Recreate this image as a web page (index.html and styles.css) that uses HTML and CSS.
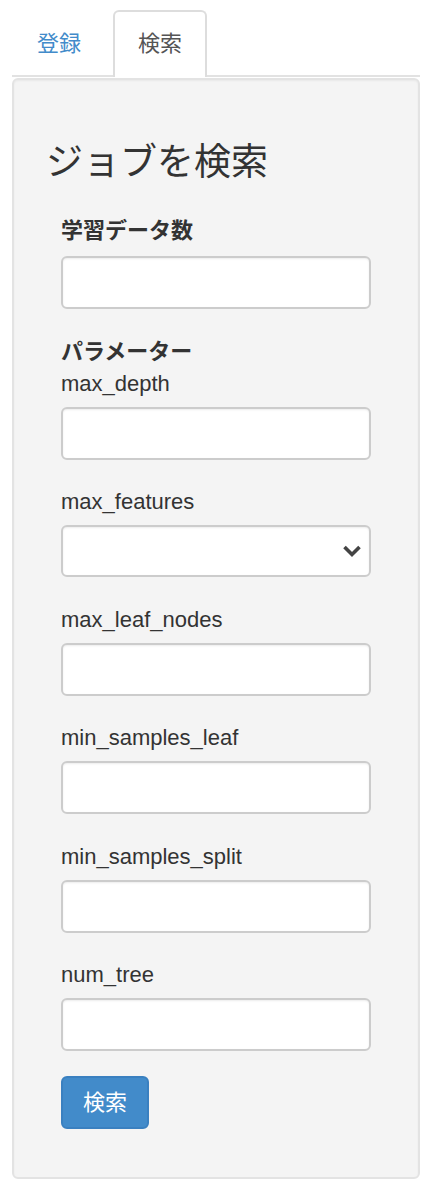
FILE: index.html
```html
<!DOCTYPE html>
<html lang="ja">
<head>
<meta charset="utf-8">
<title>ジョブを検索</title>
<link rel="stylesheet" href="styles.css">
</head>
<body>
<div class="page">
  <ul class="tabs">
    <li class="tab"><a class="tab-link" href="#">登録</a></li>
    <li class="tab active"><a class="tab-link" href="#">検索</a></li>
  </ul>
  <div class="well">
    <h3 class="title">ジョブを検索</h3>
    <form class="form">
      <div class="group first">
        <label class="label bold">学習データ数</label>
        <input class="control" type="text">
      </div>
      <div class="section-label">パラメーター</div>
      <div class="group">
        <label class="label">max_depth</label>
        <input class="control" type="text">
      </div>
      <div class="group">
        <label class="label">max_features</label>
        <div class="select-wrap">
          <select class="control select"><option></option></select>
          <svg class="chevron" width="20" height="14" viewBox="0 0 20 14"><path d="M2.5 3 L10 10.5 L17.5 3" fill="none" stroke="#444" stroke-width="3.6" stroke-linecap="butt" stroke-linejoin="miter"/></svg>
        </div>
      </div>
      <div class="group">
        <label class="label">max_leaf_nodes</label>
        <input class="control" type="text">
      </div>
      <div class="group">
        <label class="label">min_samples_leaf</label>
        <input class="control" type="text">
      </div>
      <div class="group">
        <label class="label">min_samples_split</label>
        <input class="control" type="text">
      </div>
      <div class="group">
        <label class="label">num_tree</label>
        <input class="control" type="text">
      </div>
      <button class="btn" type="button">検索</button>
    </form>
  </div>
</div>
</body>
</html>
```
FILE: styles.css
```css
* { box-sizing: border-box; }
html, body { margin: 0; padding: 0; background: #fff; }
body {
  font-family: "Liberation Sans", "Noto Sans CJK JP", sans-serif;
  font-size: 22px;
  line-height: 31px;
  color: #333;
}
.page { padding: 10px 10px 0 12px; }
.tabs {
  list-style: none;
  margin: 0;
  padding: 0;
  display: flex;
  border-bottom: 2px solid #e2e2e2;
}
.tab { margin-right: 7px; margin-bottom: -2px; }
.tab-link {
  display: block;
  padding: 16px 23px;
  line-height: 31px;
  border: 2px solid transparent;
  border-bottom: none;
  border-radius: 6px 6px 0 0;
  color: #428bca;
  text-decoration: none;
  height: 67px;
}
.tab.active .tab-link {
  color: #555;
  background: #fff;
  border-color: #ddd;
}
.well {
  margin-top: 1px;
  background: #f4f4f4;
  border: 2px solid #e3e3e3;
  border-radius: 6px;
  box-shadow: inset 0 1px 2px rgba(0,0,0,.05);
  padding: 0 34px 48px;
}
.title {
  margin: 62px 0 32px -2px;
  font-size: 37px;
  line-height: 41px;
  font-weight: 400;
  color: #333;
}
.form { padding: 0 13px; }
.group { margin-bottom: 26.5px; }
.group.first { margin-bottom: 28px; }
.label {
  display: block;
  margin-bottom: 8px;
  font-weight: 400;
}
.bold { font-weight: 700; margin-bottom: 9.5px; }
.section-label { font-weight: 700; margin-bottom: 1px; margin-top: -1px; }
.control {
  display: block;
  width: 100%;
  height: 53px;
  margin: 0;
  padding: 10px 16px;
  font: inherit;
  color: #555;
  background: #fff;
  border: 2px solid #ccc;
  border-radius: 6px;
  box-shadow: inset 0 1px 2px rgba(0,0,0,.08);
  outline: none;
}
.select-wrap { position: relative; }
.select { appearance: none; -webkit-appearance: none; height: 52px; }
.chevron {
  position: absolute;
  right: 9px;
  top: 19px;
  pointer-events: none;
}
.btn {
  display: block;
  margin-top: -2px;
  height: 53px;
  padding: 9px 20px;
  font: inherit;
  line-height: 31px;
  color: #fff;
  background: #428bca;
  border: 2px solid #3a80c0;
  border-radius: 6px;
  cursor: pointer;
}
```
